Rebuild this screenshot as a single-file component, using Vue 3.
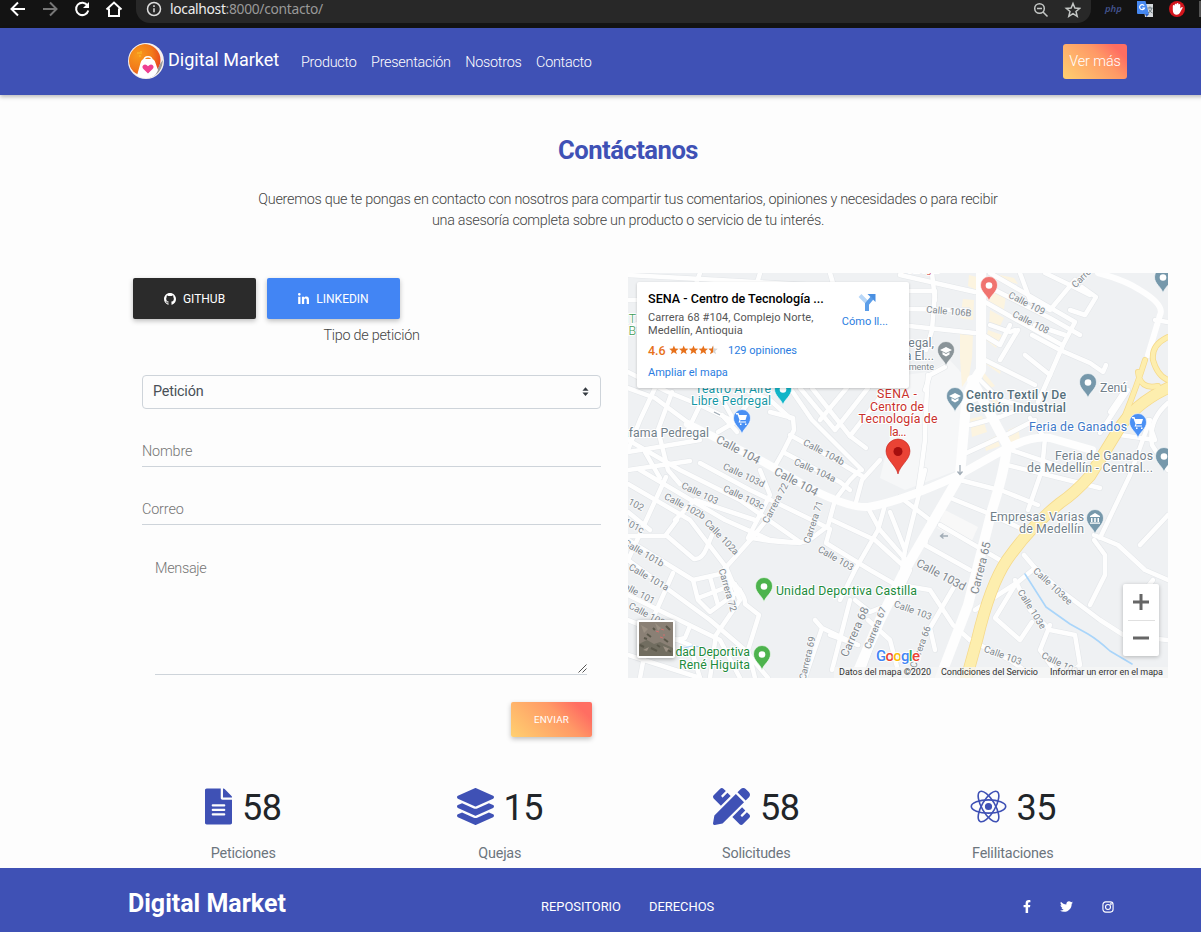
<script setup>
const links = ['Producto', 'Presentación', 'Nosotros', 'Contacto']

const stats = [
  { icon: 'file', value: 58, label: 'Peticiones' },
  { icon: 'layers', value: 15, label: 'Quejas' },
  { icon: 'tools', value: 58, label: 'Solicitudes' },
  { icon: 'atom', value: 35, label: 'Felilitaciones' },
]

const blocks = [
  'M969 275L985 279 980 292 968 286Z', 'M963 299L974 300 973 320 960 318Z', 'M960 334L973 334 972 358 960 358Z',
  'M960 357L972 357 969 377 962 387Z', 'M988 286L1006 296 1003 315 988 305Z', 'M990 310L1004 318 1000 326 989 326Z',
  'M988 330L1002 335 996 348 986 340Z', 'M986 358L1002 366 1000 374 986 364Z', 'M981 369L995 386 986 390Z',
  'M970 419L982 416 987 432 972 437Z', 'M984 442L996 436 1000 446 986 451Z', 'M1008 430L1018 426 1020 440 1009 445Z',
  'M992 399L1000 402 1003 412 994 410Z', 'M1000 275L1014 278 1018 284 1002 280Z',
]

const smallRoads = [
  'M628 372L668 392 700 405 735 422', 'M628 388L655 398 690 424', 'M655 388L640 420 628 450', 'M672 392L658 430 668 470 680 484',
  'M700 405L688 430', 'M628 452L700 440', 'M628 470L690 461', 'M645 452L660 478', 'M715 387L735 422 718 432', 'M742 388L770 400 790 418',
  'M737 432L722 415 M735 420L760 388', 'M770 412L793 418 794 430 783 452 775 466', 'M790 435L832 458 862 476', 'M783 452L840 482 850 490',
  'M790 388L812 420 862 470', 'M800 388L835 430 868 388', 'M812 388L850 436 882 395', 'M820 420L870 360', 'M850 436L866 448',
  'M628 300L900 300 M628 330L640 322', 'M700 273L690 300 M760 273L752 300 M830 273L838 300', 'M628 275L900 290',
  'M628 440L680 470 740 500 800 542', 'M640 470L725 520 770 540 800 543', 'M700 463L750 490 812 520', 'M760 470L770 495 748 538',
  'M628 484L690 520 726 567', 'M666 477L628 560', 'M675 520L695 500 755 520', 'M628 536L665 536 677 520', 'M667 536L694 559Q702 560 707 547L712 535',
  'M628 512L650 530', 'M628 540L693 580 720 574 752 538 772 513', 'M673 573L650 625 640 678', 'M628 560L710 620 745 650 768 678',
  'M628 595L720 640 740 678', 'M628 620L690 645 700 678', 'M628 655L700 678', 'M693 580L698 600 710 612 740 590 M698 598L735 584 M710 577L718 605 M725 572L733 598',
  'M726 567L740 600 716 635 710 678', 'M730 580Q746 595 745 604L759 615 748 650 755 678', 'M690 626L685 638 676 640',
  'M752 538Q790 545 808 541L828 526 835 500 850 480 860 470', 'M812 520L830 529 826 543 870 570 905 590', 'M832 520L875 540 908 570',
  'M855 506L862 480 880 460', 'M868 508L880 530 906 560', 'M885 505L878 530 855 570 840 600', 'M890 512L905 550 925 470', 'M900 497L930 520 925 545',
  'M815 620L822 628 858 645 M822 628L805 678', 'M855 600L870 612 895 602 910 570', 'M858 645L830 635 M868 620L890 640 900 678', 'M850 600L832 670',
  'M900 291L935 291 932 330 926 350 M900 325L975 333', 'M905 309L968 310', 'M932 273L935 300', 'M900 275L975 292', 'M985 285L1050 318 1080 335',
  'M990 273L1075 322 1063 345 1050 375 1038 402', 'M1020 273L1030 300 1050 310 1075 280', 'M1045 273L1070 285 1090 295', 'M1082 287L1096 297 1085 315 1070 310',
  'M985 302L1008 315 1062 345', 'M990 325L1010 332 1015 330', 'M985 336L1000 345 1010 325', 'M985 360L1035 385', 'M1060 350L1090 363 1103 372 1106 365',
  'M1035 325L1065 335 M1032 335L1060 350 M1025 355L1050 375 M1018 330L1000 360', 'M928 375Q925 420 925 440Q922 465 918 490', 'M945 367L930 375 925 390',
  'M967 402L990 395 M970 425L1000 417 1030 405', 'M962 455L1010 433 1035 420', 'M980 380L1000 400 1040 410', 'M1030 418L1045 438 1042 470 1028 510',
  'M1003 464L1100 488', 'M1005 448L1070 470', 'M960 480L1003 491 1038 505', 'M948 497L985 512 1020 528', 'M940 525L1000 560',
  'M925 545L970 570', 'M905 550L900 585 930 590 953 625 970 640', 'M955 585L930 628 935 650', 'M892 590L870 650 860 678',
  'M1024 555L1035 568 1018 582 975 610', 'M1035 568L1060 590 1100 620 1125 636 1168 640', 'M1015 580L1030 610 1050 630 1075 635 1080 665 1065 678',
  'M1015 585L995 618 1020 640 1032 622', 'M1050 625L1040 650 1060 678', 'M970 640L1010 660 1035 678', 'M1094 535L1118 545 1145 570 1168 580',
  'M1094 540L1105 555 1105 575 1090 605', 'M1100 538L1130 475 1150 420', 'M1140 545L1168 515', 'M1153 580L1145 590', 'M1120 435L1155 440 1148 420',
  'M1100 433L1128 390', 'M1110 412L1125 390', 'M1168 403Q1148 420 1152 445L1168 470', 'M1155 320L1168 322',
]

const streets = [
  ['Calle 104', 738, 450, 28, 11.5], ['Calle 104', 796, 482, 28, 11.5], ['Calle 104b', 824, 452, 28], ['Calle 104a', 815, 470, 24],
  ['Calle 103d', 744, 475, 25], ['Calle 103', 700, 493, 25], ['Calle 103c', 744, 497, 25], ['Calle 102b', 685, 506, 28],
  ['Carrera 72', 775, 503, -62], ['Carrera 71', 813, 522, -72], ['Calle 102', 626, 499, 28], ['Calle 102a', 722, 537, 46],
  ['Calle 101c', 624, 520, 28], ['Calle 101b', 644, 553, 30], ['Calle 101a', 649, 577, 30], ['Calle 101', 637, 592, 28], ['Calle 100', 647, 614, 28],
  ['Calle 103', 836, 558, 30], ['Carrera 72', 728, 590, 74], ['Carrera 68', 855, 632, -66, 11.5], ['Carrera 67', 875, 628, -68],
  ['Carrera 69', 807, 658, -77], ['Calle 103d', 941, 575, 28, 11.5], ['Carrera 65', 981, 568, -76, 11.5], ['Calle 103ee', 1053, 586, 43],
  ['Calle 103e', 1032, 609, 58], ['Calle 103', 1003, 655, 20], ['Calle 103', 1060, 663, 26], ['Calle 103', 913, 610, 20],
  ['Carrera 66', 920, 647, -70], ['Calle 106B', 949, 311, 5], ['Calle 109', 1027, 303, 27], ['Calle 108', 1031, 322, 27], ['Carrera', 1084, 275, -45],
]

const pins = [
  [989, 301, '#f0736f', 'dot'], [946, 366, '#8a9499', 'cap'], [955, 412, '#7698ab', 'cap'], [1088, 398, '#7698ab', 'dot'],
  [783, 405, '#12b5c8', 'dot'], [742, 434, '#4a90f4', 'cart'], [1138, 438, '#4a90f4', 'cart'], [1095, 534, '#7698ab', 'bank'],
  [1164, 472, '#7698ab', 'dot'], [1163, 293, '#7698ab', 'dot'], [764, 602, '#4db34d', 'dot'], [762, 670, '#4db34d', 'dot'],
]

const places = [
  ['Teatro Al Aire', 771, 393, '#1797a6', 'end', 76], ['Libre Pedregal', 771, 405, '#1797a6', 'end', 80],
  ['Cafama Pedregal', 709, 437, '#71808a', 'end', 95],
  ['SENA -', 897, 398, '#c9302c', 'middle', 40], ['Centro de', 897, 411, '#c9302c', 'middle', 54],
  ['Tecnología de', 898, 423, '#c9302c', 'middle', 79], ['la...', 898, 436, '#c9302c', 'middle', 17],
  ['Pedregal,', 934, 347, '#71808a', 'end', 51], ['Sala El...', 934, 360, '#71808a', 'end', 46],
  ['Centro Textil y De', 966, 399, '#56707c', 'start', 100, 500], ['Gestión Industrial', 966, 411.5, '#56707c', 'start', 100, 500],
  ['Zenú', 1100, 392, '#71808a', 'start', 27], ['Feria de Ganados', 1127, 431, '#4078c8', 'end', 98],
  ['Feria de Ganados', 1153, 459.5, '#71808a', 'end', 98], ['de Medellín -  Central...', 1153, 472, '#71808a', 'end', 126],
  ['Empresas Varias', 1084, 521, '#71808a', 'end', 94], ['de Medellín', 1084, 533, '#71808a', 'end', 65],
  ['Unidad Deportiva Castilla', 776, 594.5, '#218a3b', 'start', 141],
  ['Unidad Deportiva', 750, 656, '#218a3b', 'end', 92], ['René Higuita', 750, 669, '#218a3b', 'end', 71],
]
</script>

<template>
  <div class="viewport">
    <header class="browser">
      <svg class="chrome-nav" viewBox="0 0 136 28" width="136" height="28" fill="none" stroke="#fff" stroke-width="2">
        <path d="M25 9H12M18 2.500L11.500 9l6.500 6.500" />
        <path d="M43 9H56M50 2.500L56.500 9 50 15.500" stroke="#777" />
        <path d="M87.500 5.500A6.200 6.200 0 1 0 88.300 10.500" /><path d="M89 2v6h-6z" fill="#fff" stroke="none" />
        <path d="M106.500 9.500L114 2.500l7.500 7M109 8.500V16h10V8.500" />
      </svg>
      <div class="address">
        <svg viewBox="0 0 16 16" width="16" height="16" fill="none" stroke="#ddd" stroke-width="1.500"><circle cx="8" cy="8" r="6.500" /><path d="M8 7.200v4M8 4.300v1.700" /></svg>
        <span class="url">localhost<i>:8000/contacto/</i></span>
        <svg class="address-tools" viewBox="0 0 48 18" width="48" height="18" fill="none" stroke="#c4c7c5" stroke-width="1.500">
          <circle cx="6.500" cy="7.500" r="4.800" /><path d="M10 11l4.500 4.500M4 7.500h5" />
          <path d="M40 2.500l1.900 4.500 4.800.4-3.700 3.100 1.200 4.800-4.200-2.600-4.200 2.600 1.200-4.800-3.700-3.100 4.800-.4z" />
        </svg>
      </div>
      <span class="php">php</span>
      <svg class="ext" viewBox="0 0 56 20" width="56" height="20">
        <path d="M7 4h10v13H9z" fill="#d5d9dc" /><path d="M1 1h8.500l3.500 13H2q-1 0-1-1z" fill="#4688f1" /><path d="M9 14h4l-2.500 3z" fill="#2f5fc4" />
        <path d="M8.200 5.700A2.500 2.500 0 1 0 8.500 8H6.200" fill="none" stroke="#fff" stroke-width="1.200" /><path d="M11.500 8h5M14 6.500V8M12 13q3-1 4-5M13 9.500q1 2.500 3.500 3.500" fill="none" stroke="#6d7b80" />
        <circle cx="41" cy="9" r="8" fill="#d3151c" />
        <path d="M36.800 10V6q0-1 .95-1t.95 1V4.700q0-1 .95-1t.95 1V4q0-1 .95-1t.95 1v1q0-1 .9-1t.9 1v3.500l1.200-1.300q.9-.5 1.300.4L43.800 13q-.9 1.700-3 1.700-4 0-4-4.700z" fill="#fff" />
      </svg>
      <span class="chrome-edge"></span>
    </header>

    <div class="page">
      <nav class="navbar">
        <svg class="logo" viewBox="0 0 36 36" width="36" height="36">
          <defs>
            <radialGradient id="orb" cx=".3" cy=".35" r=".8"><stop offset="0" stop-color="#f89a1c" /><stop offset=".55" stop-color="#f27a1a" /><stop offset="1" stop-color="#e63c20" /></radialGradient>
            <clipPath id="orbClip"><circle cx="18" cy="18" r="17" /></clipPath>
          </defs>
          <circle cx="18" cy="18" r="18" fill="#f5f0ee" />
          <g clip-path="url(#orbClip)">
            <circle cx="16.500" cy="17" r="16" fill="url(#orb)" />
            <path d="M22 35Q34 31 35 17l-3 4q-3 8-10 13" fill="#999" />
            <path d="M8 36L12.500 20q1-4 4-4h7q3 0 4 4l2.500 7q-2 6-8 9z" fill="#fff" />
            <path d="M16 17.500q0-3.800 4-3.800t4 3.800" fill="none" stroke="#fff" stroke-width="1.500" />
          </g>
          <path d="M20 30.500l-4.600-4.600q-2-2.300.1-4 2.300-1.400 4.500 1.400 2.300-2.800 4.500-1.400 2.100 1.700.1 4z" fill="#ee3f91" />
          <path d="M9 10h3M13 8v3M11 13h2" stroke="#fbc02d" />
        </svg>
        <span class="brand">Digital Market</span>
        <a v-for="l in links" :key="l" class="nav-link">{{ l }}</a>
        <button class="more">Ver más</button>
      </nav>

      <main>
        <h2>Contáctanos</h2>
        <p class="intro">Queremos que te pongas en contacto con nosotros para compartir tus comentarios, opiniones y necesidades o para recibir<br>una asesoría completa sobre un producto o servicio de tu interés.</p>

        <section class="contact">
          <div class="left">
            <div class="socials">
              <button class="social dark">
                <svg viewBox="0 0 16 16" width="12" height="12" fill="#fff"><path d="M8 0C3.580 0 0 3.580 0 8c0 3.540 2.290 6.530 5.470 7.590.4.070.550-.170.550-.380 0-.190-.010-.820-.010-1.490-2.010.370-2.530-.490-2.690-.940-.090-.230-.480-.940-.820-1.130-.280-.150-.680-.520-.010-.530.630-.010 1.080.580 1.230.820.720 1.210 1.870.870 2.330.660.070-.520.280-.870.510-1.070-1.780-.2-3.640-.890-3.640-3.950 0-.870.310-1.590.820-2.150-.080-.2-.360-1.020.080-2.120 0 0 .670-.210 2.200.820.640-.180 1.320-.270 2-.270.680 0 1.360.090 2 .270 1.530-1.040 2.200-.820 2.200-.820.440 1.100.160 1.920.080 2.120.510.560.820 1.270.820 2.150 0 3.070-1.870 3.750-3.650 3.950.290.250.540.730.540 1.480 0 1.070-.010 1.930-.010 2.200 0 .210.150.460.550.380A8.013 8.013 0 0016 8c0-4.420-3.580-8-8-8z" /></svg>
                <span>GITHUB</span>
              </button>
              <button class="social blue">
                <svg viewBox="0 0 448 448" width="11" height="11" fill="#fff"><path d="M100.280 448H7.400V148.900h92.880zM53.790 108.100C24.090 108.100 0 83.500 0 53.800a53.790 53.790 0 0 1 107.580 0c0 29.700-24.100 54.300-53.790 54.300zM447.900 448h-92.680V302.400c0-34.700-.7-79.200-48.290-79.200-48.290 0-55.690 37.700-55.690 76.700V448h-92.780V148.900h89.080v40.800h1.300c12.400-23.500 42.690-48.300 87.880-48.300 94 0 111.280 61.900 111.280 142.300V448z" /></svg>
                <span>LINKEDIN</span>
              </button>
            </div>
            <label class="tipo">Tipo de petición</label>
            <div class="select"><span>Petición</span><svg viewBox="0 0 8 10" width="7" height="9" fill="#343a40"><path d="M4 0l3.500 4h-7zM4 10L.5 6h7z" /></svg></div>
            <div class="field"><span>Nombre</span></div>
            <div class="field second"><span>Correo</span></div>
            <div class="area"><span>Mensaje</span><svg viewBox="0 0 9 9" width="9" height="9" stroke="#555"><path d="M.5 8.500l8-8M4.500 8.500l4-4" /></svg></div>
            <button class="send">ENVIAR</button>
          </div>

          <div class="map">
            <svg class="canvas" viewBox="628 273 540 405" width="540" height="405">
              <rect x="628" y="273" width="540" height="405" fill="#eff1f3" />
              <path d="M905 375L928 372 950 360 968 380 958 470 905 490 880 478Z" fill="#f6f7f8" />
              <path d="M945 510L978 527 970 545 937 528Z" fill="#f8f8f8" />
              <path v-for="b in blocks" :key="b" :d="b" fill="#fcf4e0" />
              <g fill="none" stroke-linejoin="round" stroke-linecap="round">
                <path v-for="r in smallRoads" :key="r" :d="r" stroke="#e3e6e9" stroke-width="5.600" />
                <path v-for="r in smallRoads" :key="r + 'w'" :d="r" stroke="#fefefe" stroke-width="4.500" />
                <g stroke="#fefefe" stroke-width="8">
                  <path d="M688 424L760 460 815 491Q850 508 868 507Q900 502 957 476L1000 452Q1030 435 1050 438L1092 450" />
                  <path d="M981 273L981 370Q967 390 966 405L960 475 905 570 880 620 855 678" stroke-width="10" />
                  <path d="M972 380L1007 445Q1005 470 992 510L968 605 940 678" stroke-width="10" />
                  <path d="M1098 273Q1125 280 1140 290Q1165 305 1160 315L1148 355" stroke-width="6" />
                </g>
                <g stroke="#f5d98a" stroke-width="12">
                  <path d="M1170 387Q1133 404 1117 432L1090 476Q1075 493 1060 503Q1030 527 1007 560Q990 585 977 640L966 680" />
                  <path d="M1145 360Q1138 383 1124 418M1168 337Q1151 345 1153 360Q1158 378 1171 381M1138 372Q1140 390 1158 386" stroke-width="6" />
                </g>
                <g stroke="#fdeeae" stroke-width="10.500">
                  <path d="M1170 387Q1133 404 1117 432L1090 476Q1075 493 1060 503Q1030 527 1007 560Q990 585 977 640L966 680" />
                  <path d="M1145 360Q1138 383 1124 418M1168 337Q1151 345 1153 360Q1158 378 1171 381M1138 372Q1140 390 1158 386" stroke-width="4.500" />
                </g>
                <path d="M1025 574L1046 607 1070 624 1088 634Q1098 640 1110 651L1132 664" stroke="#a9d5fa" stroke-width="1.600" />
                <path d="M684 648l8-2 12 1" stroke="#a9d5fa" />
              </g>
              <g class="street">
                <text v-for="(s, i) in streets" :key="i" :transform="`translate(${s[1]} ${s[2]}) rotate(${s[3]})`" :font-size="s[4] || 9.5" text-anchor="middle" dy="3.500">{{ s[0] }}</text>
                <text x="934" y="370" font-size="9" text-anchor="end">Cerrado temporalmente</text>
              </g>
              <g v-for="(p, i) in pins" :key="i" :transform="`translate(${p[0]} ${p[1]})`">
                <path d="M0 0C-1.500-6-8.500-9-8.500-16a8.500 8.500 0 1 1 17 0C8.500-9 1.500-6 0 0Z" :fill="p[2]" stroke="#fff" stroke-width=".6" />
                <circle v-if="p[3] === 'dot'" cy="-15.500" r="3.300" fill="#fff" />
                <path v-else-if="p[3] === 'cap'" d="M-6-16l6-3 6 3-6 3zM-3.500-14v2.500l3.500 2 3.500-2V-14L0-12z" fill="#fff" />
                <path v-else-if="p[3] === 'cart'" d="M-6-21h2.500l.7 2H5l-1.500 5h-5l-.5 1.500h6v1h-7.500l1-2.500-2-5.500H-6zM-2-10.500h1.500v1.500H-2zM3-10.500h1.500v1.500H3z" fill="#fff" />
                <path v-else d="M0-21l5 3v1H-5v-1zM-4-16h1.500v4H-4zM-.8-16H.8v4H-.8zM2.500-16H4v4H2.500zM-5-11.500H5v1.200H-5z" fill="#fff" />
              </g>
              <path d="M898 474C896 465 886 460 886 451a12 12 0 1 1 24 0C910 460 900 465 898 474Z" fill="#ea4335" stroke="#c5221f" stroke-width=".6" /><circle cx="898" cy="451.500" r="4.500" fill="#a50e0e" />
              <g class="place">
                <text v-for="(p, i) in places" :key="i" :x="p[1]" :y="p[2]" :fill="p[3]" :text-anchor="p[4]" :textLength="p[5]" :font-weight="p[6] || 400">{{ p[0] }}</text>
                <text x="636" y="323" fill="#3d9b55" text-anchor="end">PUNT</text><text x="636" y="335" fill="#3d9b55" text-anchor="end">RIB</text>
                <text x="920" y="273" fill="#c9302c" text-anchor="middle" font-size="10">Pedregal</text>
              </g>
              <path d="M960 465v9M957.500 471.500l2.500 3 2.500-3M948 536h-7M943.500 533.500l-3 2.500 3 2.500M714 412l6 3" fill="none" stroke="#a0abb5" stroke-width="1.300" />
              <text class="google" x="876" y="660.500" textLength="44"><tspan fill="#4285f4">G</tspan><tspan fill="#ea4335">o</tspan><tspan fill="#fbbc05">o</tspan><tspan fill="#4285f4">g</tspan><tspan fill="#34a853">l</tspan><tspan fill="#ea4335">e</tspan></text>
              <rect x="834" y="667" width="334" height="11" fill="#f5f5f5" opacity=".75" />
              <g class="legal">
                <text x="839" y="675" textLength="92">Datos del mapa ©2020</text><text x="941" y="675" textLength="97">Condiciones del Servicio</text><text x="1050" y="675" textLength="113">Informar un error en el mapa</text>
              </g>
            </svg>

            <div class="card">
              <div class="info">
                <strong>SENA - Centro de Tecnología ...</strong>
                <p>Carrera 68 #104, Complejo Norte,<br>Medellín, Antioquia</p>
                <div class="rating"><b>4.6</b>
                  <svg viewBox="0 0 50 10" width="49" height="10"><path v-for="n in 5" :key="n" :transform="`translate(${(n - 1) * 10} 0)`" :fill="n === 5 ? '#d5d5d5' : '#e7711b'" d="M5 .3l1.300 3.200 3.500.2-2.700 2.200.9 3.400L5 7.400 2 9.300l.9-3.400L.2 3.700l3.500-.2z" /><path d="M45 .3V7.400L42 9.300l.9-3.400-2.700-2.200 3.500-.2z" fill="#e7711b" /></svg>
                  <a>129 opiniones</a>
                </div>
                <a class="larger">Ampliar el mapa</a>
              </div>
              <div class="route">
                <svg viewBox="0 0 18 18" width="18" height="18" fill="none"><path d="M2 2.500L9 9.500" stroke="#b8d7f8" stroke-width="4" /><path d="M9 18V11L14 5" stroke="#5c9ee9" stroke-width="4" /><path d="M9.500 1H17.500V9z" fill="#4a90e2" /></svg>
                <a>Cómo ll...</a>
              </div>
            </div>
            <div class="zoom"><span><svg viewBox="0 0 16 16" width="16" height="16"><path d="M8 0v16M0 8h16" stroke="#666" stroke-width="3" /></svg></span><hr><span><svg viewBox="0 0 16 16" width="16" height="16"><path d="M0 8h16" stroke="#666" stroke-width="3" /></svg></span></div>
            <svg class="satellite" viewBox="0 0 38 38" width="38" height="38">
              <rect width="38" height="38" rx="2" fill="#fff" /><rect x="2" y="2" width="34" height="34" fill="#8a8075" />
              <path d="M2 24l8-4 7 4 6-2 13 6v8H2z" fill="#716d60" /><path d="M4 5l7 4-4 4zM18 3l6 5-3 3zM6 30l6-3-2 4zM26 26l7 3-4 3z" fill="#9b9083" />
              <path d="M3 25l4 2M10 14l4 3M14 28l6 3M29 6l4 4M16 8l2 2M27 19l4 3M7 18l3 1M20 25l3 2M31 30l3 2" stroke="#5a574a" stroke-width="2" /><path d="M19 11l3 1M24 9l3 1M23 17l3 1M27 14v2" stroke="#d0706e" />
            </svg>
          </div>
        </section>

        <section class="stats">
          <div v-for="s in stats" :key="s.label" class="stat">
            <div class="figure">
              <svg v-if="s.icon === 'file'" viewBox="0 0 384 512" width="27" height="37"><path fill="#3f51b5" d="M224 136V0H24C10.700 0 0 10.700 0 24v464c0 13.300 10.700 24 24 24h336c13.300 0 24-10.700 24-24V160H248c-13.200 0-24-10.800-24-24zm64 236c0 6.600-5.400 12-12 12H108c-6.600 0-12-5.400-12-12v-8c0-6.600 5.400-12 12-12h168c6.600 0 12 5.400 12 12v8zm0-64c0 6.600-5.400 12-12 12H108c-6.600 0-12-5.400-12-12v-8c0-6.600 5.400-12 12-12h168c6.600 0 12 5.400 12 12v8zm0-72v8c0 6.600-5.400 12-12 12H108c-6.600 0-12-5.400-12-12v-8c0-6.600 5.400-12 12-12h168c6.600 0 12 5.400 12 12zm96-114.100v6.100H256V0h6.100c6.400 0 12.500 2.500 17 7l97.900 98c4.500 4.500 7 10.600 7 16.900z" /></svg>
              <svg v-else-if="s.icon === 'layers'" viewBox="0 0 512 512" width="37" height="37"><path fill="#3f51b5" d="M12.410 148.020l232.940 105.670c6.800 3.090 14.490 3.090 21.290 0l232.940-105.670c16.550-7.510 16.550-32.520 0-40.030L266.650 2.310a25.607 25.607 0 0 0-21.290 0L12.410 107.980c-16.550 7.510-16.550 32.530 0 40.040zm487.180 88.280l-58.090-26.330-161.640 73.270c-7.560 3.430-15.590 5.170-23.860 5.170s-16.290-1.740-23.860-5.170L70.510 209.970l-58.100 26.330c-16.550 7.500-16.550 32.500 0 40l232.940 105.590c6.800 3.080 14.490 3.080 21.290 0L499.590 276.300c16.550-7.500 16.550-32.500 0-40zm0 127.800l-57.870-26.230-161.860 73.370c-7.560 3.430-15.590 5.170-23.860 5.170s-16.290-1.740-23.860-5.170L70.290 337.870 12.410 364.100c-16.550 7.500-16.550 32.500 0 40l232.940 105.590c6.800 3.080 14.490 3.080 21.290 0L499.590 404.100c16.550-7.500 16.550-32.500 0-40z" /></svg>
              <svg v-else-if="s.icon === 'tools'" viewBox="0 0 512 512" width="37" height="37"><path fill="#3f51b5" d="M109.460 244.040l134.580-134.560-44.120-44.120-61.680 61.680a7.919 7.919 0 0 1-11.210 0l-11.210-11.210c-3.100-3.100-3.100-8.120 0-11.210l61.680-61.680-33.640-33.650C131.470-3.100 111.390-3.100 99 9.290L9.290 99c-12.380 12.390-12.390 32.470 0 44.860l100.170 100.180zm388.470-116.800c18.760-18.760 18.750-49.170 0-67.930l-45.250-45.250c-18.760-18.760-49.180-18.760-67.950 0l-46.020 46.010 113.200 113.200 46.020-46.030zM316.080 82.710l-297 296.960L.320 487.110c-2.530 14.490 10.090 27.110 24.590 24.560l107.450-18.840L429.280 195.900 316.080 82.710zm186.630 285.430l-33.640-33.640-61.680 61.680c-3.100 3.100-8.120 3.100-11.210 0l-11.210-11.210c-3.090-3.100-3.090-8.120 0-11.210l61.680-61.680-44.140-44.140L267.930 402.500l100.210 100.200c12.390 12.390 32.470 12.390 44.860 0l89.710-89.700c12.390-12.390 12.390-32.470 0-44.860z" /></svg>
              <svg v-else viewBox="0 0 37 37" width="37" height="37" fill="none" stroke="#3f51b5" stroke-width="1.600"><ellipse cx="18.500" cy="18.500" rx="17.200" ry="6.600" /><ellipse cx="18.500" cy="18.500" rx="17.200" ry="6.600" transform="rotate(60 18.500 18.500)" /><ellipse cx="18.500" cy="18.500" rx="17.200" ry="6.600" transform="rotate(120 18.500 18.500)" /><circle cx="18.500" cy="18.500" r="2.800" fill="#3f51b5" /></svg>
              <span>{{ s.value }}</span>
            </div>
            <p>{{ s.label }}</p>
          </div>
        </section>
      </main>

      <footer>
        <strong>Digital Market</strong>
        <a class="repo">REPOSITORIO</a><a class="rights">DERECHOS</a>
        <div class="follow">
          <svg viewBox="0 0 320 512" width="8" height="13" fill="#fff"><path d="M279.140 288l14.220-92.660h-88.910v-60.130c0-25.350 12.420-50.060 52.240-50.060h40.420V6.260S260.430 0 225.360 0c-73.220 0-121.080 44.380-121.080 124.720v70.620H22.890V288h81.390v224h100.170V288z" /></svg>
          <svg viewBox="0 0 512 512" width="13" height="13" fill="#fff"><path d="M459.370 151.716c.325 4.548.325 9.097.325 13.645 0 138.720-105.583 298.558-298.558 298.558-59.452 0-114.680-17.219-161.137-47.106 8.447.974 16.568 1.299 25.340 1.299 49.055 0 94.213-16.568 130.274-44.832-46.132-.975-84.792-31.188-98.112-72.772 6.498.974 12.995 1.624 19.818 1.624 9.421 0 18.843-1.300 27.614-3.573-48.081-9.747-84.143-51.980-84.143-102.985v-1.299c13.969 7.797 30.214 12.670 47.431 13.319-28.264-18.843-46.781-51.005-46.781-87.391 0-19.492 5.197-37.360 14.294-52.954 51.655 63.675 129.300 105.258 216.365 109.807-1.624-7.797-2.599-15.918-2.599-24.040 0-57.828 46.782-104.934 104.934-104.934 30.213 0 57.502 12.670 76.670 33.137 23.715-4.548 46.456-13.320 66.599-25.340-7.798 24.366-24.366 44.833-46.132 57.827 21.117-2.273 41.584-8.122 60.426-16.243-14.292 20.791-32.161 39.308-52.628 54.253z" /></svg>
          <svg viewBox="0 0 13 13" width="12" height="12" fill="none" stroke="#fff" stroke-width="1.200"><rect x="1" y="1" width="11" height="11" rx="3" /><circle cx="6.500" cy="6.500" r="2.700" /><circle cx="9.700" cy="3.300" r=".4" /></svg>
        </div>
      </footer>
    </div>
  </div>
</template>

<style>
body { margin: 0; background: #fdfdfd; }
</style>
<style scoped>
.viewport { width: 1201px; height: 932px; overflow: hidden; font-family: Roboto, "Noto Sans", sans-serif; font-weight: 300; font-size: 14.400px; color: #444; background: #fdfdfd; }
.viewport * { box-sizing: border-box; }
svg { display: block; flex: none; }
button { border: 0; font-family: inherit; color: #fff; padding: 0; }
.browser { height: 28px; background: #131313; display: flex; align-items: flex-start; }
.address { width: 955px; height: 23px; background: #282828; border-radius: 0 0 14px 14px; display: flex; align-items: flex-start; padding: 1px 9px 0 10px; }
.url { margin-left: 8px; font: 400 13.800px/16px "Noto Sans", sans-serif; letter-spacing: -.3px; color: #eee; white-space: nowrap; }
.url i { font-style: normal; color: #999; }
.address-tools { margin-left: auto; margin-right: 1px; }
.php { margin: 1px 0 0 14px; width: 31px; font: italic 600 9.500px/15px "Noto Sans", sans-serif; color: #42528c; }
.chrome-edge { width: 2px; height: 16px; background: #555; margin: 1px 0 0 7px; }
.page { width: 1256px; }
.navbar { height: 67px; padding: 0 129px 1px 128px; background: #3f51b5; display: flex; align-items: center; color: #fff; box-shadow: 0 2px 4px rgba(0,0,0,.26); }
.brand { font-size: 18px; font-weight: 400; margin: 0 22px 3px 4px; width: 111px; white-space: nowrap; }
.nav-link { margin: 2px 14.500px 0 0; white-space: nowrap; letter-spacing: -.25px; }
.more { margin-left: auto; margin-top: 1px; width: 64px; height: 35px; border-radius: 3px; font-size: 14.400px; font-weight: 300; letter-spacing: -.1px; background: linear-gradient(45deg, #ffd070, #ff9966 60%, #ff6e62 85%); }
h2 { margin: 38px 0 0; height: 34px; font-size: 25.600px; letter-spacing: -.5px; line-height: 35px; font-weight: 700; text-align: center; color: #3f51b5; }
.intro { margin: 21px 0 0; height: 43px; text-align: center; line-height: 21px; letter-spacing: -.275px; padding-top: 1px; white-space: nowrap; }
.contact { display: flex; margin: 42px 0 0 115px; height: 480px; }
.left { width: 513px; padding: 5px 27px 0; }
.socials { display: flex; gap: 11px; margin-left: -9px; }
.social { height: 41px; border-radius: 2px; display: flex; align-items: center; justify-content: center; gap: 7px; font-size: 12px; font-weight: 400; box-shadow: 0 2px 5px rgba(0,0,0,.25); }
.dark { width: 123px; background: #2b2b2b; }
.blue { width: 133px; background: #4285f4; }
.tipo { display: block; text-align: center; line-height: 22px; margin-top: 6px; letter-spacing: -.25px; }
.select { height: 34px; margin-top: 28px; border: 1px solid #ced4da; border-radius: 4px; display: flex; align-items: center; justify-content: space-between; padding: 0 11px 1px 10px; color: #495057; font-weight: 400; letter-spacing: -.2px; }
.field { height: 32px; margin-top: 26px; border-bottom: 1px solid #ced4da; color: #757575; line-height: 34px; letter-spacing: -.15px; }
.area { height: 122px; margin: 28px 14px 0 13px; border-bottom: 1px solid #ced4da; display: flex; justify-content: space-between; color: #757575; padding-top: 6px; line-height: 19px; letter-spacing: -.3px; }
.area svg { align-self: flex-end; margin-bottom: 1px; }
.send { display: block; width: 81px; height: 35px; margin: 27px 9px 0 auto; border-radius: 2px; font-size: 9.800px; font-weight: 400; letter-spacing: .2px; background: linear-gradient(45deg, #ffd070, #ff9966 60%, #ff6e62 85%); box-shadow: 0 2px 5px rgba(0,0,0,.25); }
.map { position: relative; width: 540px; height: 405px; flex: none; }
.street { font-family: Roboto, sans-serif; font-weight: 400; fill: #80878d; stroke: #f8f9fa; stroke-width: 2px; paint-order: stroke; }
.place { font-family: Roboto, sans-serif; font-size: 12.300px; stroke: #fff; stroke-width: 2px; paint-order: stroke; }
.google { font: 500 15px Roboto, sans-serif; stroke: #fff; stroke-width: 2px; paint-order: stroke; }
.legal { font: 400 9px Roboto, sans-serif; fill: #333; }
.card { position: absolute; left: 9px; top: 9px; width: 272px; height: 106px; background: #fff; border-radius: 2px; box-shadow: 0 1px 3px rgba(0,0,0,.2); padding: 9px 17px 0 11px; display: flex; justify-content: space-between; font-size: 11px; font-weight: 400; color: #555; white-space: nowrap; }
.card strong { display: block; font-size: 12.600px; line-height: 16px; font-weight: 500; color: #000; }
.card p { margin: 4px 0 0; line-height: 13px; letter-spacing: .08px; }
.card a { color: #2a7de1; }
.rating { display: flex; align-items: center; margin-top: 5px; height: 16px; }
.rating b { color: #e7711b; font-weight: 500; font-size: 12.500px; width: 21px; }
.rating a { margin-left: 10px; }
.larger { display: block; margin-top: 8px; line-height: 14px; }
.route { padding-top: 2px; display: flex; flex-direction: column; align-items: center; gap: 4px; margin-right: 4px; }
.route svg { margin-left: 4px; }
.zoom { position: absolute; left: 495px; top: 311px; width: 36px; height: 72px; background: #fff; border-radius: 2px; box-shadow: 0 1px 4px rgba(0,0,0,.25); display: flex; flex-direction: column; align-items: center; }
.zoom span { flex: 1; display: flex; align-items: center; }
.zoom hr { width: 27px; height: 1px; border: 0; background: #e0e0e0; margin: 0; }
.satellite { position: absolute; left: 9px; top: 347px; filter: drop-shadow(0 1px 2px rgba(0,0,0,.35)); }
.stats { display: flex; width: 1026px; height: 115px; margin-left: 115px; padding-top: 35px; }
.stat { width: 25%; text-align: center; }
.figure { display: flex; justify-content: center; gap: 10px; height: 37px; font-size: 36px; line-height: 41px; font-weight: 400; letter-spacing: -.6px; color: #212529; }
.stat p { margin: 18px 0 0; line-height: 22px; color: #6c757d; font-weight: 400; letter-spacing: -.2px; }
footer { height: 80px; background: #3f51b5; color: #fff; padding: 0 128px; display: flex; align-items: flex-start; }
footer strong { width: 413px; margin-top: 20px; font-size: 25px; line-height: 32px; font-weight: 700; }
footer a { margin-top: 30px; font-size: 12.900px; line-height: 17px; font-weight: 400; width: 108px; }
.follow { display: flex; align-items: center; margin: 32px 0 0 262px; width: 101px; height: 13px; justify-content: space-between; }
.follow svg:first-child { margin-left: 4px; }
.follow svg:last-child { margin-right: 6px; }
</style>
